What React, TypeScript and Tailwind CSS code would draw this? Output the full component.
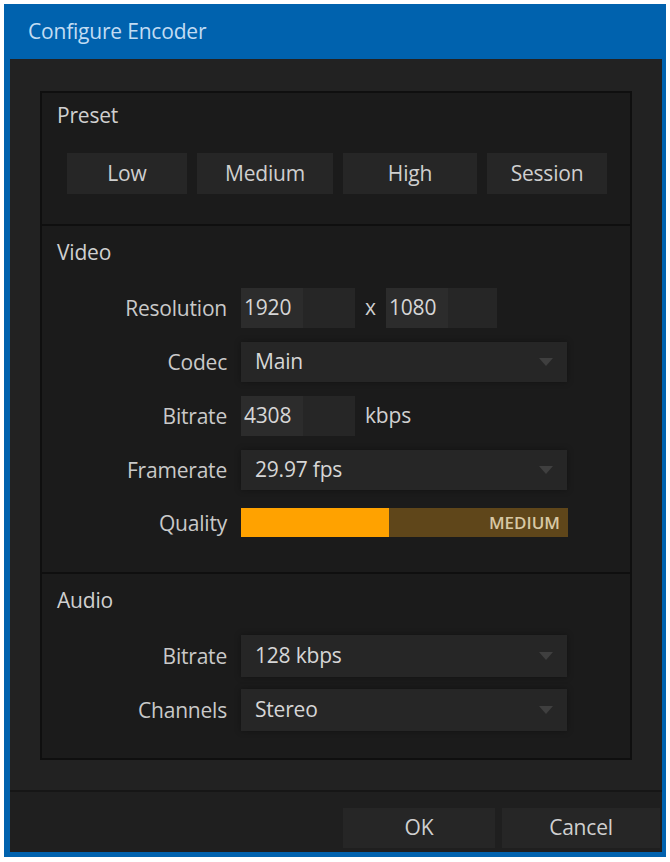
import React from "react";

const font = { fontFamily: '"Open Sans", "Noto Sans", sans-serif' };

function Arrow() {
  return (
    <svg width="14" height="8" viewBox="0 0 14 8" className="shrink-0">
      <path d="M0 0 L14 0 L7 8 Z" fill="#3f3f3f" />
    </svg>
  );
}

function Label({ children }: { children: React.ReactNode }) {
  return (
    <div className="w-[185px] shrink-0 text-right text-[21px] leading-[26px] tracking-[-0.2px] text-[#c9c9c9]">
      {children}
    </div>
  );
}

function NumberBox({ value, w }: { value: string; w: string }) {
  return (
    <div className={`flex h-[40px] items-stretch bg-[#262626] ${w}`}>
      <div className="flex w-[62px] items-center bg-[#2c2c2c] pl-[3px] text-[21px] tracking-[-0.2px] text-[#d6d6d6]">
        {value}
      </div>
    </div>
  );
}

function Dropdown({ value, h = "h-[40px]" }: { value: string; h?: string }) {
  return (
    <div
      className={`flex w-[326px] items-center justify-between bg-[#262626] pl-[14px] pr-[14px] shadow-[0_0_6px_rgba(0,0,0,0.35)] ${h}`}
    >
      <span className="text-[21px] tracking-[-0.2px] text-[#d6d6d6]">{value}</span>
      <Arrow />
    </div>
  );
}

function SectionTitle({ children }: { children: React.ReactNode }) {
  return (
    <div className="pl-[15px] text-[21px] leading-[26px] tracking-[-0.2px] text-[#d0d0d0]">
      {children}
    </div>
  );
}

export default function App() {
  return (
    <div className="min-h-screen bg-white pl-[4px] pt-[4px]" style={font}>
      <div className="flex h-[853px] w-[662px] flex-col bg-[#0062ae] pb-[5px] pl-[6px] pr-[4px]">
        {/* Title bar */}
        <div className="flex h-[55px] shrink-0 items-center pl-[18px] text-[21px] tracking-[-0.2px] text-[#c2dcf3]">
          Configure Encoder
        </div>

        {/* Body */}
        <div className="h-[731px] shrink-0 bg-[#222222] px-[30px] pt-[32px]">
          <div className="h-[669px] border-2 border-[#0f0f0f] bg-[#1b1b1b]">
            {/* Preset */}
            <div className="h-[133px] border-b-2 border-[#0f0f0f] pt-[9px]">
              <SectionTitle>Preset</SectionTitle>
              <div className="mt-[25px] flex gap-[10px] pl-[25px]">
                {[
                  ["Low", "w-[120px]"],
                  ["Medium", "w-[136px]"],
                  ["High", "w-[134px]"],
                  ["Session", "w-[120px]"],
                ].map(([t, w]) => (
                  <div
                    key={t}
                    className={`flex h-[41px] items-center justify-center bg-[#262626] text-[21px] tracking-[-0.2px] text-[#cfcfcf] ${w}`}
                  >
                    {t}
                  </div>
                ))}
              </div>
            </div>

            {/* Video */}
            <div className="h-[348px] border-b-2 border-[#0f0f0f] pt-[13px]">
              <SectionTitle>Video</SectionTitle>
              <div className="mt-[23px] flex flex-col gap-[14px]">
                <div className="flex items-center">
                  <Label>Resolution</Label>
                  <div className="ml-[14px] flex items-center">
                    <NumberBox value="1920" w="w-[114px]" />
                    <span className="ml-[10px] mr-[10px] text-[21px] text-[#d0d0d0]">x</span>
                    <NumberBox value="1080" w="w-[111px]" />
                  </div>
                </div>
                <div className="flex items-center">
                  <Label>Codec</Label>
                  <div className="ml-[14px]">
                    <Dropdown value="Main" />
                  </div>
                </div>
                <div className="flex items-center">
                  <Label>Bitrate</Label>
                  <div className="ml-[14px] flex items-center">
                    <NumberBox value="4308" w="w-[114px]" />
                    <span className="ml-[10px] text-[21px] tracking-[-0.2px] text-[#d0d0d0]">kbps</span>
                  </div>
                </div>
                <div className="flex items-center">
                  <Label>Framerate</Label>
                  <div className="ml-[14px]">
                    <Dropdown value="29.97 fps" />
                  </div>
                </div>
                <div className="mt-[4px] flex items-center">
                  <Label>Quality</Label>
                  <div className="ml-[14px] flex h-[29px] w-[327px] items-stretch bg-[#5f461a]">
                    <div className="w-[148px] bg-[#ffa200]" />
                    <div className="flex flex-1 items-center justify-end pr-[8px] text-[17px] font-semibold text-[#d8c8a4]">
                      MEDIUM
                    </div>
                  </div>
                </div>
              </div>
            </div>

            {/* Audio */}
            <div className="pt-[13px]">
              <SectionTitle>Audio</SectionTitle>
              <div className="mt-[22px] flex flex-col gap-[12px]">
                <div className="flex items-center">
                  <Label>Bitrate</Label>
                  <div className="ml-[14px]">
                    <Dropdown value="128 kbps" h="h-[42px]" />
                  </div>
                </div>
                <div className="flex items-center">
                  <Label>Channels</Label>
                  <div className="ml-[14px]">
                    <Dropdown value="Stereo" h="h-[42px]" />
                  </div>
                </div>
              </div>
            </div>
          </div>
        </div>

        {/* Footer */}
        <div className="flex flex-1 justify-end gap-[7px] border-t-2 border-[#161616] bg-[#1f1f1f] pr-[2px] pt-[16px]">
          <div className="flex h-[40px] w-[152px] items-center justify-center bg-[#262626] text-[21px] text-[#d0d0d0]">
            OK
          </div>
          <div className="flex h-[40px] w-[158px] items-center justify-center bg-[#262626] text-[21px] tracking-[-0.2px] text-[#d0d0d0]">
            Cancel
          </div>
        </div>
      </div>
    </div>
  );
}
